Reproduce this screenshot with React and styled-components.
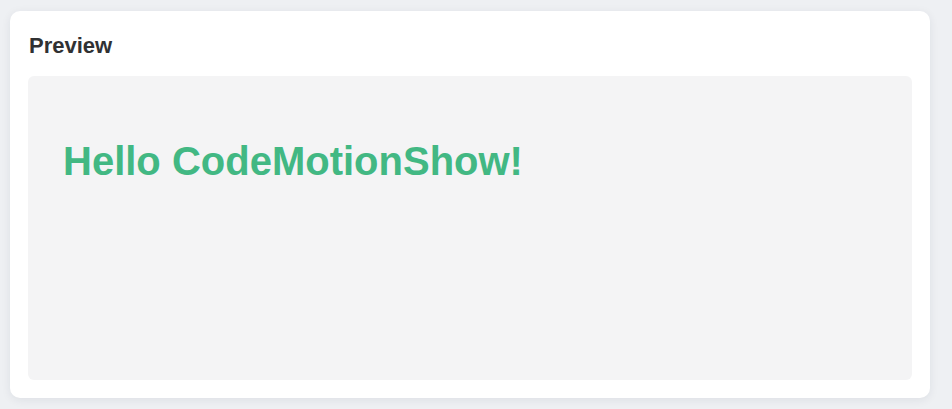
import React from "react";
import styled, { createGlobalStyle } from "styled-components";

const Global = createGlobalStyle`
  html, body { margin: 0; padding: 0; height: 100%; }
  body {
    background: #eef0f3;
    font-family: "Liberation Sans", Arial, sans-serif;
  }
  #root { height: 100%; }
`;

const Page = styled.div`
  box-sizing: border-box;
  height: 100vh;
  padding: 11px 22px 11px 10px;
  display: flex;
`;

const Card = styled.section`
  box-sizing: border-box;
  flex: 1;
  display: flex;
  flex-direction: column;
  background: #ffffff;
  border-radius: 10px;
  padding: 18px;
  box-shadow: 0 2px 10px rgba(30, 40, 70, 0.08);
`;

const Title = styled.h2`
  margin: 0 0 14px 1px;
  font-size: 22px;
  line-height: 33px;
  font-weight: 700;
  color: #303133;
`;

const PreviewArea = styled.div`
  box-sizing: border-box;
  flex: 1;
  background: #f4f4f5;
  border-radius: 6px;
  padding: 36px 35px 35px;
`;

const Greeting = styled.h1`
  margin: 0.67em 0;
  font-size: 40px;
  font-weight: 700;
  color: #42b883;
`;

export default function App() {
  return (
    <>
      <Global />
      <Page>
        <Card>
          <Title>Preview</Title>
          <PreviewArea>
            <Greeting>Hello CodeMotionShow!</Greeting>
          </PreviewArea>
        </Card>
      </Page>
    </>
  );
}
